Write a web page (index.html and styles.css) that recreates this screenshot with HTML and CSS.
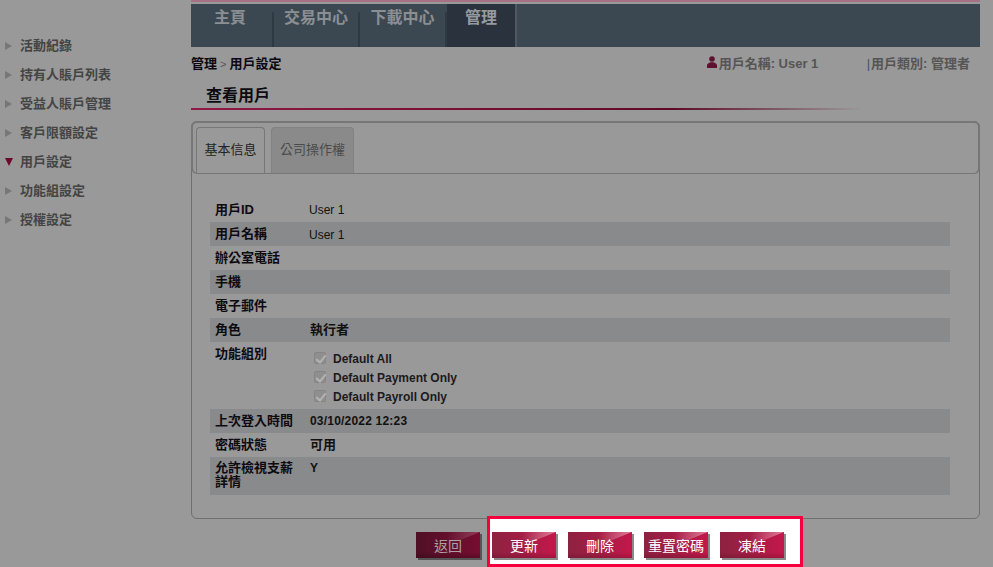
FILE: index.html
```html
<!DOCTYPE html>
<html lang="zh-Hant">
<head>
<meta charset="utf-8">
<title>查看用戶</title>
<link rel="stylesheet" href="styles.css">
</head>
<body>
<aside class="side">
  <ul class="side-list">
    <li class="side-item"><span class="arrow"></span>活動紀錄</li>
    <li class="side-item"><span class="arrow"></span>持有人賬戶列表</li>
    <li class="side-item"><span class="arrow"></span>受益人賬戶管理</li>
    <li class="side-item"><span class="arrow"></span>客戶限額設定</li>
    <li class="side-item"><span class="arrow down"></span>用戶設定</li>
    <li class="side-item"><span class="arrow"></span>功能組設定</li>
    <li class="side-item"><span class="arrow"></span>授權設定</li>
  </ul>
</aside>
<main class="main">
  <div class="topline"></div>
  <nav class="nav">
    <a class="nav-item w1">主頁</a>
    <a class="nav-item w2">交易中心</a>
    <a class="nav-item w3">下載中心</a>
    <a class="nav-item w4 active">管理</a>
  </nav>
  <div class="crumbs">
    <div class="crumb"><b>管理</b><span class="gt"> &gt; </span><b>用戶設定</b></div>
    <div class="user">
      <svg class="user-icon" viewBox="0 0 10 12" width="10" height="12"><circle cx="5" cy="3" r="2.8"/><path d="M0 12V9.2C0 7.6 2 7 3.4 6.2h3.2C8 7 10 7.6 10 9.2V12Z"/></svg>
      <span class="user-name">用戶名稱: User 1</span>
      <span class="user-type"><i class="bar">|</i>用戶類別: 管理者</span>
    </div>
  </div>
  <h1 class="title">查看用戶</h1>
  <section class="panel">
    <div class="tabs">
      <div class="tab on">基本信息</div>
      <div class="tab off">公司操作權</div>
    </div>
    <div class="rows">
      <div class="row"><div class="lab">用戶ID</div><div class="val thin">User 1</div></div>
      <div class="row alt"><div class="lab">用戶名稱</div><div class="val thin">User 1</div></div>
      <div class="row"><div class="lab">辦公室電話</div><div class="val"></div></div>
      <div class="row alt"><div class="lab">手機</div><div class="val"></div></div>
      <div class="row"><div class="lab">電子郵件</div><div class="val"></div></div>
      <div class="row alt"><div class="lab">角色</div><div class="val">執行者</div></div>
      <div class="row group">
        <div class="lab">功能組別</div>
        <div class="checks">
          <label class="check"><input type="checkbox" checked disabled>Default All</label>
          <label class="check"><input type="checkbox" checked disabled>Default Payment Only</label>
          <label class="check"><input type="checkbox" checked disabled>Default Payroll Only</label>
        </div>
      </div>
      <div class="row alt"><div class="lab">上次登入時間</div><div class="val date">03/10/2022 12:23</div></div>
      <div class="row"><div class="lab">密碼狀態</div><div class="val">可用</div></div>
      <div class="row alt tall"><div class="lab">允許檢視支薪詳情</div><div class="val date">Y</div></div>
    </div>
  </section>
  <div class="actions">
    <div class="spot"></div>
    <button class="btn back">返回</button>
    <button class="btn">更新</button>
    <button class="btn">刪除</button>
    <button class="btn">重置密碼</button>
    <button class="btn">凍結</button>
  </div>
</main>
</body>
</html>
```
FILE: styles.css
```css
* { box-sizing: border-box; }
html, body { height: 100%; }
body {
  margin: 0;
  width: 993px;
  height: 567px;
  overflow: hidden;
  display: flex;
  background: #999;
  color: #111;
  font: 13px "Liberation Sans", "Noto Sans CJK TC", sans-serif;
}
.side { width: 191px; flex: none; padding-top: 31px; }
.side-list { list-style: none; margin: 0; padding: 0; }
.side-item {
  height: 29px;
  line-height: 29px;
  display: flex;
  align-items: center;
  padding-left: 5px;
  font-weight: bold;
  color: #444;
}
.arrow {
  width: 0; height: 0;
  margin-right: 8px;
  border-left: 7px solid #777;
  border-top: 4px solid transparent;
  border-bottom: 4px solid transparent;
}
.arrow.down {
  border-top: 8px solid #6b0a2a;
  border-left: 4px solid transparent;
  border-right: 4px solid transparent;
  border-bottom: 0;
  margin-right: 7px;
}
.main { width: 789px; flex: none; position: relative; }
.topline { height: 2px; background: #a77085; margin-bottom: 2px; }
.nav { height: 43px; background: #3b4852; display: flex; }
.nav-item {
  height: 43px;
  padding-top: 2px;
  text-align: center;
  font-size: 16px;
  line-height: 24px;
  font-weight: bold;
  color: #8b8f93;
  border-right: 2px solid transparent;
  background: linear-gradient(#2e3942, #2e3942) right 8px / 2px 36px no-repeat;
  background-origin: border-box;
}
.w1 { width: 83px; padding-right: 3px; }
.w2 { width: 86px; }
.w3 { width: 87px; }
.w4 { width: 70px; }
.nav-item.active { background: #2a333d; color: #969a9e; border-right-color: #4d5a64; }
.crumbs {
  height: 33px;
  display: flex;
  justify-content: space-between;
  align-items: center;
  padding-bottom: 3px;
  padding-right: 10px;
}
.crumb b { color: #0b0810; }
.gt { color: #555; font-size: 11px; }
.user { display: flex; align-items: center; font-weight: bold; color: #555; }
.user-icon { fill: #5e1230; margin-right: 2px; }
.user-name { width: 148px; }
.bar { font-style: normal; font-weight: normal; color: #44525c; margin-right: 1px; }
.title {
  margin: 0 0 11px;
  height: 30px;
  padding: 6px 0 0 15px;
  font-size: 16px;
  line-height: 20px;
  font-weight: bold;
  color: #0d0a10;
  border-bottom: 2px solid transparent;
  border-image: linear-gradient(90deg, #8f1a45 0, #7d0f35 30%, #5e0a28 61%, #999 85%) 1;
}
.panel {
  width: 789px;
  height: 398px;
  border: 1px solid #6f6f6f;
  border-radius: 6px;
}
.tabs {
  height: 53px;
  border: 2px solid #777;
  border-bottom-width: 1px;
  border-radius: 6px;
  margin: -1px -1px 0;
  padding: 4px 0 0 3px;
  display: flex;
  gap: 6px;
}
.tab {
  height: 46px;
  font-size: 13px;
  line-height: 44px;
  text-align: center;
  border-radius: 4px 4px 0 0;
}
.tab.on { width: 69px; border: 1px solid #777; border-bottom: 0; color: #222; }
.tab.off { width: 83px; background: #8a8a8a; color: #4a4a4a; border: 1px solid #828282; border-bottom: 0; }
.rows { width: 740px; margin: 24px 0 0 18px; }
.row { display: flex; height: 24px; line-height: 24px; font-weight: bold; color: #111; }
.row.alt { background: #898a8c; }
.lab { width: 100px; padding-left: 5px; flex: none; color: #0d0a10; }
.val { flex: 1; }
.val.thin { font-size: 12px; font-weight: normal; margin-left: -1px; }
.alt .val.thin { padding-top: 1px; }
.val.date { font-size: 12px; letter-spacing: .2px; }
.group { height: 67px; }
.tall { height: 38px; line-height: 14px; padding-top: 4px; }
.tall .lab { width: 100px; padding-right: 14px; }
.checks { padding-top: 8px; padding-left: 4px; }
.check { display: flex; align-items: center; height: 19px; line-height: 19px; font-size: 12px; color: #1c1a20; }
.check input {
  appearance: none;
  position: relative;
  width: 12px;
  height: 12px;
  margin: 0 7px 4px 0;
  background: #8f8f8f;
  border: 1px solid #858585;
  border-radius: 2px;
}
.check input::after {
  content: "";
  position: absolute;
  left: 3px;
  top: 0;
  width: 4px;
  height: 8px;
  border: solid #b3b3b3;
  border-width: 0 2px 2px 0;
  transform: rotate(40deg);
}
.actions {
  position: relative;
  height: 48px;
  padding: 13px 0 0 225px;
  display: flex;
  gap: 12px;
  align-items: flex-start;
}
.spot {
  position: absolute;
  left: 296px;
  top: -3px;
  width: 316px;
  height: 51px;
  background: #fff;
  border: 3px solid #f5003f;
}
.btn {
  position: relative;
  z-index: 1;
  width: 64px;
  height: 26px;
  padding: 0;
  border: 0;
  font: 14px "Liberation Sans", "Noto Sans CJK TC", sans-serif;
  color: #fff;
  background:
    linear-gradient(to bottom, rgba(0,0,0,0) 78%, rgba(60,0,20,.22) 100%),
    linear-gradient(90deg, #8c2240 0, #a81d45 55%, #c4174b 100%);
  box-shadow: 2px 2px 0 #8a8a8a;
}
.btn::before {
  content: "";
  position: absolute;
  inset: 0;
  z-index: -1;
  clip-path: polygon(45% 0, 100% 0, 45% 55%);
  background: linear-gradient(100deg, rgba(255,255,255,0) 45%, rgba(255,255,255,.5) 100%);
}
.btn.back {
  color: #a9a2a6;
  background:
    linear-gradient(to bottom, rgba(0,0,0,0) 78%, rgba(20,0,8,.25) 100%),
    linear-gradient(90deg, #4f1026 0, #650f2c 55%, #760d31 100%);
  box-shadow: 2px 2px 0 #555;
}
.btn.back::before { opacity: .45; }
```
